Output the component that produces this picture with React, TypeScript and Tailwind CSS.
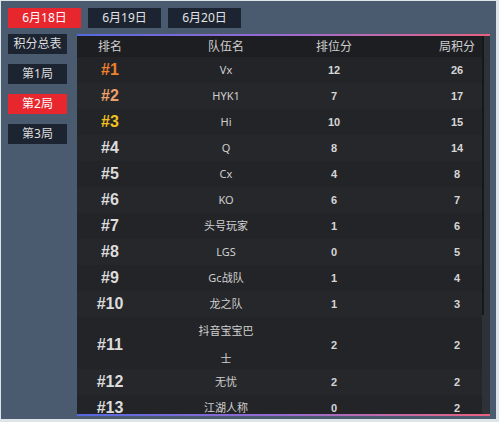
import React from "react";

const rows = [
  { r: "#1", name: "Vx", a: "12", b: "26", c: "text-[#f0802c]" },
  { r: "#2", name: "HYK1", a: "7", b: "17", c: "text-[#eda06a]" },
  { r: "#3", name: "Hi", a: "10", b: "15", c: "text-[#f2c21c]" },
  { r: "#4", name: "Q", a: "8", b: "14", c: "text-[#dcdcdc]" },
  { r: "#5", name: "Cx", a: "4", b: "8", c: "text-[#dcdcdc]" },
  { r: "#6", name: "KO", a: "6", b: "7", c: "text-[#dcdcdc]" },
  { r: "#7", name: "头号玩家", a: "1", b: "6", c: "text-[#dcdcdc]" },
  { r: "#8", name: "LGS", a: "0", b: "5", c: "text-[#dcdcdc]" },
  { r: "#9", name: "Gc战队", a: "1", b: "4", c: "text-[#dcdcdc]" },
  { r: "#10", name: "龙之队", a: "1", b: "3", c: "text-[#dcdcdc]" },
  { r: "#11", name: "抖音宝宝巴士", a: "2", b: "2", c: "text-[#dcdcdc]", tall: true },
  { r: "#12", name: "无忧", a: "2", b: "2", c: "text-[#dcdcdc]" },
  { r: "#13", name: "江湖人称", a: "0", b: "2", c: "text-[#dcdcdc]" },
];

export default function App() {
  const font = { fontFamily: '"Noto Sans", "Noto Sans CJK SC", sans-serif' };
  const num = { fontFamily: '"Liberation Sans", "Noto Sans CJK SC", sans-serif' };
  return (
    <div className="w-[499px] h-[422px] bg-[#dfe4e9] overflow-hidden" style={font}>
      <div className="ml-[1px] mt-[1px] w-[495px] h-[418px] bg-[#4a5b70] overflow-hidden">
        <div className="flex gap-[7px] pl-[7px] pt-[7px]">
          <div className="w-[73px] h-[20px] bg-[#e8262d] text-white text-[12px] flex items-center justify-center">6月18日</div>
          <div className="w-[73px] h-[20px] bg-[#1c2331] text-[#e4e4e4] text-[12px] flex items-center justify-center">6月19日</div>
          <div className="w-[73px] h-[20px] bg-[#1c2331] text-[#e4e4e4] text-[12px] flex items-center justify-center">6月20日</div>
        </div>
        <div className="flex mt-[6px] pl-[7px]">
          <div className="w-[59px] flex flex-col gap-[10px]">
            <div className="h-[20px] bg-[#1c2331] text-[#dcdcdc] text-[12px] flex items-center justify-center">积分总表</div>
            <div className="h-[20px] bg-[#1c2331] text-[#dcdcdc] text-[12px] flex items-center justify-center">第1局</div>
            <div className="h-[20px] bg-[#e8262d] text-white text-[12px] flex items-center justify-center">第2局</div>
            <div className="h-[20px] bg-[#1c2331] text-[#dcdcdc] text-[12px] flex items-center justify-center">第3局</div>
          </div>
          <div className="ml-[10px] w-[413px] h-[382px] flex flex-col bg-[#232428]">
            <div className="h-[2px] shrink-0 bg-gradient-to-r from-[#5368e0] via-[#9a6ad0] to-[#e8607e]" />
            <div className="flex-1 flex overflow-hidden">
              <div className="w-[405px] flex flex-col">
                <div className="h-[21px] shrink-0 grid grid-cols-[66px_166px_50px_1fr_50px] items-center bg-[#1d1e21] text-[#cfcfcf] text-[12px] pt-[1px]">
                  <div className="text-center">排名</div>
                  <div className="text-center">队伍名</div>
                  <div className="text-center">排位分</div>
                  <div />
                  <div className="text-center">局积分</div>
                </div>
                {rows.map((row, i) => (
                  <div
                    key={row.r}
                    className={`grid grid-cols-[66px_166px_50px_1fr_50px] items-center shrink-0 ${row.tall ? "h-[52px]" : "h-[26px]"} ${i % 2 === 0 ? "bg-[#232428]" : "bg-[#26272b]"}`}
                  >
                    <div className={`text-center font-bold text-[16px] leading-[16px] ${row.c}`} style={num}>{row.r}</div>
                    <div className="flex justify-center">
                      <div className={`text-center text-[11px] text-[#d0d0d0] ${row.tall ? "w-[60px] leading-[28px] break-all" : "leading-[16px]"}`}>{row.name}</div>
                    </div>
                    <div className="text-center font-bold text-[11px] text-[#d6d6d6]" style={num}>{row.a}</div>
                    <div />
                    <div className="text-center font-bold text-[11px] text-[#d6d6d6]" style={num}>{row.b}</div>
                  </div>
                ))}
              </div>
              <div className="w-[8px] flex bg-[#2d3138]">
                <div className="w-[2px] h-[279px] bg-[#16171a]" />
              </div>
            </div>
            <div className="h-[2px] shrink-0 bg-gradient-to-r from-[#5368e0] via-[#9a6ad0] to-[#e8607e]" />
          </div>
        </div>
      </div>
    </div>
  );
}
